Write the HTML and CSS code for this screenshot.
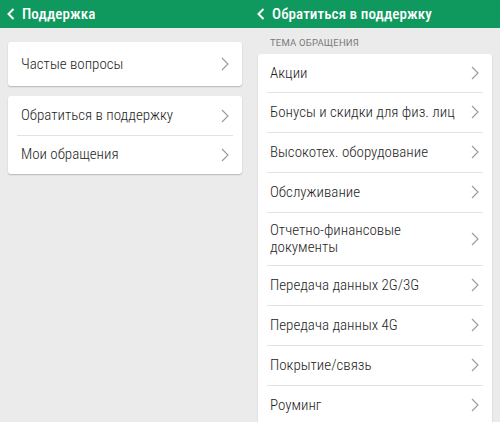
FILE: index.html
```html
<!DOCTYPE html>
<html lang="ru">
<head>
<meta charset="utf-8">
<link rel="stylesheet" href="styles.css">
</head>
<body>
<div class="screens">
  <section class="panel">
    <header class="bar">
      <svg class="back" width="8" height="12" viewBox="0 0 8 12"><polyline points="6.5,1 1.5,6 6.5,11" fill="none" stroke="#fff" stroke-width="2"/></svg>
      <span class="title">Поддержка</span>
    </header>
    <div class="content left">
      <div class="card">
        <div class="row tall"><span>Частые вопросы</span><svg class="chev" width="8" height="14" viewBox="0 0 8 14"><polyline points="1,1 7,7 1,13" fill="none" stroke="#999" stroke-width="1.1"/></svg></div>
      </div>
      <div class="card">
        <div class="row short"><span>Обратиться в поддержку</span><svg class="chev" width="8" height="14" viewBox="0 0 8 14"><polyline points="1,1 7,7 1,13" fill="none" stroke="#999" stroke-width="1.1"/></svg></div>
        <div class="row short"><span>Мои обращения</span><svg class="chev" width="8" height="14" viewBox="0 0 8 14"><polyline points="1,1 7,7 1,13" fill="none" stroke="#999" stroke-width="1.1"/></svg></div>
      </div>
    </div>
  </section>
  <section class="panel">
    <header class="bar">
      <svg class="back" width="8" height="12" viewBox="0 0 8 12"><polyline points="6.5,1 1.5,6 6.5,11" fill="none" stroke="#fff" stroke-width="2"/></svg>
      <span class="title">Обратиться в поддержку</span>
    </header>
    <div class="content right">
      <div class="label">ТЕМА ОБРАЩЕНИЯ</div>
      <div class="card">
        <div class="row first"><span>Акции</span><svg class="chev" width="8" height="14" viewBox="0 0 8 14"><polyline points="1,1 7,7 1,13" fill="none" stroke="#999" stroke-width="1.1"/></svg></div>
        <div class="row"><span>Бонусы и скидки для физ. лиц</span><svg class="chev" width="8" height="14" viewBox="0 0 8 14"><polyline points="1,1 7,7 1,13" fill="none" stroke="#999" stroke-width="1.1"/></svg></div>
        <div class="row"><span>Высокотех. оборудование</span><svg class="chev" width="8" height="14" viewBox="0 0 8 14"><polyline points="1,1 7,7 1,13" fill="none" stroke="#999" stroke-width="1.1"/></svg></div>
        <div class="row"><span>Обслуживание</span><svg class="chev" width="8" height="14" viewBox="0 0 8 14"><polyline points="1,1 7,7 1,13" fill="none" stroke="#999" stroke-width="1.1"/></svg></div>
        <div class="row double"><span>Отчетно-финансовые<br>документы</span><svg class="chev" width="8" height="14" viewBox="0 0 8 14"><polyline points="1,1 7,7 1,13" fill="none" stroke="#999" stroke-width="1.1"/></svg></div>
        <div class="row"><span>Передача данных 2G/3G</span><svg class="chev" width="8" height="14" viewBox="0 0 8 14"><polyline points="1,1 7,7 1,13" fill="none" stroke="#999" stroke-width="1.1"/></svg></div>
        <div class="row"><span>Передача данных 4G</span><svg class="chev" width="8" height="14" viewBox="0 0 8 14"><polyline points="1,1 7,7 1,13" fill="none" stroke="#999" stroke-width="1.1"/></svg></div>
        <div class="row"><span>Покрытие/связь</span><svg class="chev" width="8" height="14" viewBox="0 0 8 14"><polyline points="1,1 7,7 1,13" fill="none" stroke="#999" stroke-width="1.1"/></svg></div>
        <div class="row"><span>Роуминг</span><svg class="chev" width="8" height="14" viewBox="0 0 8 14"><polyline points="1,1 7,7 1,13" fill="none" stroke="#999" stroke-width="1.1"/></svg></div>
      </div>
    </div>
  </section>
</div>
</body>
</html>
```
FILE: styles.css
```css
html, body {
  margin: 0;
  padding: 0;
  background: #ebebeb;
  font-family: Roboto, "Noto Sans", sans-serif;
  color: #222;
}
.screens {
  display: grid;
  grid-template-columns: 250px 250px;
  width: 500px;
  height: 422px;
  overflow: hidden;
}
.panel {
  display: flex;
  flex-direction: column;
  overflow: hidden;
}
.bar {
  height: 28px;
  background: #0f995e;
  display: flex;
  align-items: center;
  padding-left: 7px;
  gap: 7px;
  flex-shrink: 0;
}
.title {
  color: #fff;
  font-family: "Roboto Condensed", "Liberation Sans Narrow", sans-serif;
  font-size: 15px;
  font-weight: 500;
  letter-spacing: 0.1px;
}
.content {
  padding: 0 8px;
}
.content.left {
  padding-top: 14px;
  display: flex;
  flex-direction: column;
  gap: 10px;
}
.label {
  font-size: 9.5px;
  color: #7a7a7a;
  padding: 9px 0 0 12px;
  height: 17px;
  letter-spacing: 0.2px;
}
.card {
  background: #fff;
  border-radius: 3px;
  box-shadow: 0 1px 1.5px rgba(0,0,0,0.22);
}
.row {
  display: flex;
  align-items: center;
  justify-content: space-between;
  min-height: 40px;
  padding: 0 13px 0 12px;
  font-family: "Roboto Condensed", "Liberation Sans Narrow", sans-serif;
  font-size: 15px;
  font-weight: 300;
  line-height: 17px;
  color: #1e1e1e;
  position: relative;
}
.row + .row::before {
  content: "";
  position: absolute;
  top: 0;
  left: 9px;
  right: 9px;
  height: 1px;
  background: #e2e2e2;
}
.row.first { min-height: 38px; }
.row.double { min-height: 53px; }
.row.tall { min-height: 44px; padding-left: 13px; }
.row.short { min-height: 39px; padding-left: 13px; }
.chev { flex-shrink: 0; }
```
